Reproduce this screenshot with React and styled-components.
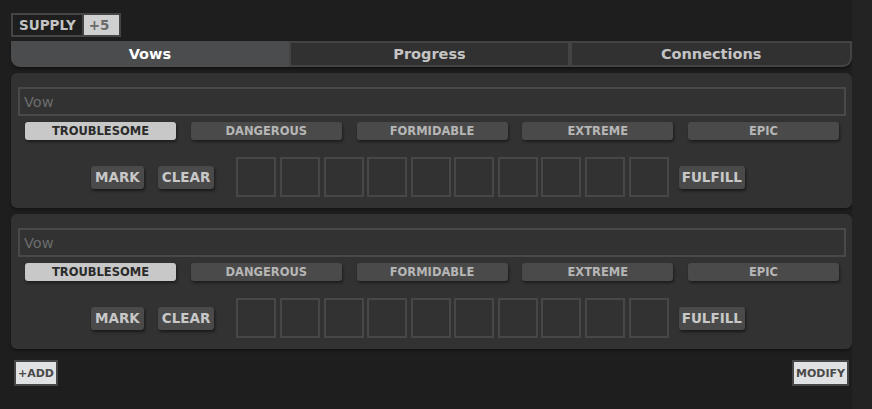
import React from 'react'
import styled, { createGlobalStyle } from 'styled-components'

const GlobalStyle = createGlobalStyle`
html, body {
  margin: 0;
  padding: 0;
  background: #1e1e1e;
  font-family: 'DejaVu Sans', 'Open Sans', sans-serif;
}
* { box-sizing: border-box; }
`

const levels = ['TROUBLESOME', 'DANGEROUS', 'FORMIDABLE', 'EXTREME', 'EPIC']
const tabs = ['Vows', 'Progress', 'Connections']

const Vow = () => (
  <Card>
    <VowInput placeholder="Vow" />
    <LevelRow>
      {levels.map((l, i) => (
        <LevelButton key={l} active={i === 0}>{l}</LevelButton>
      ))}
    </LevelRow>
    <TrackRow>
      <SmallButton>MARK</SmallButton>
      <SmallButton gap={22}>CLEAR</SmallButton>
      <Boxes>
        {Array.from({ length: 10 }).map((_, i) => <Box key={i} />)}
      </Boxes>
      <SmallButton>FULFILL</SmallButton>
    </TrackRow>
  </Card>
)

const App = () => (
  <Page>
    <GlobalStyle />
    <Main>
      <Supply>
        <SupplyLabel>SUPPLY</SupplyLabel>
        <SupplyValue>+5</SupplyValue>
      </Supply>
      <TabBar>
        {tabs.map((t, i) => (
          <Tab key={t} active={i === 0}>{t}</Tab>
        ))}
      </TabBar>
      <Vow />
      <Vow />
      <Footer>
        <LightButton>+ADD</LightButton>
        <LightButton>MODIFY</LightButton>
      </Footer>
    </Main>
    <Gutter />
  </Page>
)

const Page = styled.div`
display: flex;
min-height: 409px;
`

const Main = styled.div`
width: 852px;
padding: 13px 0 0 11px;
display: flex;
flex-direction: column;
`

const Gutter = styled.div`
flex: 1;
background: #232323;
`

const Supply = styled.div`
display: flex;
align-self: flex-start;
height: 24px;
border: 2px solid #454545;
`

const SupplyLabel = styled.div`
display: flex;
align-items: center;
padding: 0 6px;
font-size: 13.5px;
font-weight: bold;
color: #c4c4c4;
border-right: 2px solid #454545;
`

const SupplyValue = styled.div`
display: flex;
align-items: center;
width: 35px;
padding-left: 5px;
background: #d0d0d0;
color: #6a6a6a;
font-size: 13.5px;
font-weight: bold;
`

const TabBar = styled.div`
display: flex;
height: 26px;
margin-top: 4px;
border-radius: 0 0 9px 9px;
overflow: hidden;
background: #313131;
box-shadow: 0 2px 3px rgba(0,0,0,0.4);
`

const Tab = styled.div`
flex: 1;
display: flex;
align-items: center;
justify-content: center;
font-size: 14.5px;
font-weight: bold;
color: ${p => p.active ? '#ffffff' : '#c4c4c4'};
background: ${p => p.active ? '#4b4c4e' : '#313131'};
border: ${p => p.active ? 'none' : '2px solid #434343'};
border-left-width: ${p => p.active ? '0' : '2px'};
&:last-child { border-radius: 0 0 9px 0; }
`

const Card = styled.div`
margin-top: 6px;
background: #323232;
border-radius: 6px;
padding: 14px 6px 11px 7px;
box-shadow: 0 2px 3px rgba(0,0,0,0.35);
`

const VowInput = styled.input`
display: block;
width: 100%;
height: 29px;
background: #323232;
border: 2px solid #494949;
outline: none;
padding: 0 4px;
font-family: inherit;
font-size: 14.5px;
color: #ccc;
&::placeholder { color: #6c6c6c; }
`

const LevelRow = styled.div`
display: flex;
justify-content: space-between;
padding: 0 7px;
margin-top: 6px;
`

const LevelButton = styled.div`
width: 151px;
height: 18px;
display: flex;
align-items: center;
justify-content: center;
border-radius: 3px;
font-size: 11.5px;
font-weight: bold;
color: ${p => p.active ? '#2b2b2b' : '#b6b6b6'};
background: ${p => p.active ? '#c8c8c8' : '#4a4a4a'};
box-shadow: 1px 2px 3px rgba(0,0,0,0.45);
`

const TrackRow = styled.div`
display: flex;
align-items: center;
margin-top: 17px;
padding-left: 73px;
`

const SmallButton = styled.div`
height: 23px;
padding: 0 4px;
margin-right: ${p => p.gap ?? 14}px;
display: flex;
align-items: center;
border-radius: 3px;
background: #4a4a4a;
color: #c8c8c8;
font-size: 13.5px;
font-weight: bold;
box-shadow: 1px 2px 3px rgba(0,0,0,0.5);
&:last-child { margin-right: 0; padding: 0 3px; }
`

const Boxes = styled.div`
display: flex;
gap: 3.6px;
margin-right: 10px;
`

const Box = styled.div`
width: 40px;
height: 40px;
border: 2px solid #474747;
`

const Footer = styled.div`
display: flex;
justify-content: space-between;
align-items: flex-start;
margin-top: 11px;
padding: 0 3px 0 3px;
`

const LightButton = styled.div`
height: 26px;
padding: 0 2px;
display: flex;
align-items: center;
background: #e0e1e2;
border: 2px solid #464646;
color: #4a4a4a;
font-size: 11px;
font-weight: bold;
`

export default App
